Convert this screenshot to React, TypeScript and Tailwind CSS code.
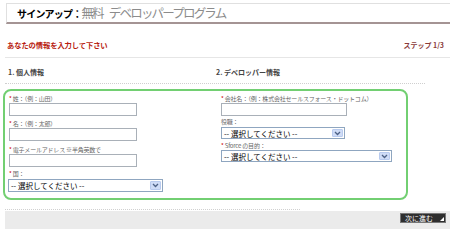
import React from "react";

const jp = { fontFamily: '"Noto Sans CJK JP", "Noto Sans", sans-serif' };

function TextBox({ w }: { w: string }) {
  return <div className={`h-[13px] ${w} border border-[#a9b0b8] bg-white`} />;
}

function Select({ w, h = "h-[13px]" }: { w: string; h?: string }) {
  return (
    <div className={`flex ${h} ${w} items-stretch border border-[#8fa6c0] bg-white`}>
      <span className="flex-1 pl-[2px] text-[7.5px] leading-[11px] text-black">-- 選択してください --</span>
      <span className="m-[1px] flex w-[11px] items-center justify-center rounded-[1px] border border-[#b9cbef] bg-[#cfdcf7]">
        <svg width="7" height="5" viewBox="0 0 7 5">
          <path d="M1 1l2.5 2.5L6 1" fill="none" stroke="#4d6185" strokeWidth="1.3" />
        </svg>
      </span>
    </div>
  );
}

function Label({ children, req = true }: { children: React.ReactNode; req?: boolean }) {
  return (
    <div className="h-[8px] text-[6px] leading-[8px] tracking-[-0.2px] text-[#666]">
      {req && <span className="text-[#c00]">* </span>}
      <span className="text-[#666]">{children}</span>
    </div>
  );
}

export default function App() {
  return (
    <div className="relative h-[229px] w-[450px] overflow-hidden bg-white" style={jp}>
      <div className="ml-[6px] mt-[3px] flex h-[21px] items-center border-l border-t border-[#e0e0e0] border-b-2 border-b-[#a49494] bg-white pl-[10px]">
        <span className="text-[10px] font-bold tracking-[-0.8px] text-black">サインアップ：</span>
        <span className="text-[12.5px] tracking-[-1.8px] text-[#8c8c8c]">無料</span>
        <span className="ml-[6px] text-[12.5px] tracking-[-1.8px] text-[#8c8c8c]">デベロッパープログラム</span>
      </div>

      <div className="mt-[16px] flex h-[11px] items-center justify-between pl-[7px] pr-[6px]">
        <span className="text-[7.3px] font-bold tracking-[-0.1px] text-[#b81c10]">あなたの情報を入力して下さい</span>
        <span className="text-[7px] font-bold text-[#8a3a3a]">ステップ 1/3</span>
      </div>
      <div className="ml-[5px] mt-[6px] border-b border-[#e6e6e6]" />

      <div className="mt-[9px] flex h-[10px] items-center text-[7px] font-bold text-[#444]">
        <span className="w-[216px] pl-[8px]">1. 個人情報</span>
        <span>2. デベロッパー情報</span>
      </div>
      <div className="ml-[5px] mr-[25px] mt-[6px] border-b border-dotted border-[#cfcfcf]" />

      <div className="ml-[3px] mt-[5px] flex h-[111px] w-[405px] rounded-[8px] border-2 border-[#72cf72] bg-white pl-[4px] pt-[4px]">
        <div className="flex w-[212px] flex-col">
          <Label>姓：（例：山田）</Label>
          <TextBox w="w-[128px]" />
          <div className="mt-[4px]">
            <Label>名：（例：太郎）</Label>
          </div>
          <TextBox w="w-[128px]" />
          <div className="mt-[5px]">
            <Label>電子メールアドレス ※半角英数で</Label>
          </div>
          <TextBox w="w-[128px]" />
          <div className="mt-[3px]">
            <Label>国：</Label>
          </div>
          <div className="mt-[1px] -ml-[1px]">
            <Select w="w-[155px]" />
          </div>
        </div>
        <div className="flex flex-col">
          <Label>会社名：（例：株式会社セールスフォース・ドットコム）</Label>
          <TextBox w="w-[126px]" />
          <div className="mt-[2px]">
            <Label req={false}>役職：</Label>
          </div>
          <div className="mt-[1px]">
            <Select w="w-[124px]" h="h-[12px]" />
          </div>
          <div className="mt-[3px]">
            <Label>Sforce の目的：</Label>
          </div>
          <Select w="w-[171px]" h="h-[12px]" />
        </div>
      </div>

      <div className="ml-[5px] mt-[9px] w-[295px] border-b border-dotted border-[#d0d0d0]" />
      <div className="ml-[5px] mt-[1px] flex h-[20px] items-start justify-end bg-[#ebebeb] pr-[4px] pt-[2px]">
        <div className="relative flex h-[10px] w-[46px] items-center border border-[#777] bg-[#2e2e2e] pl-[4px]">
          <span className="text-[7px] leading-[8px] text-white">次に進む</span>
          <span className="absolute bottom-[1px] right-[1px] h-0 w-0 border-b-[4px] border-l-[4px] border-b-white border-l-transparent" />
        </div>
      </div>
    </div>
  );
}
